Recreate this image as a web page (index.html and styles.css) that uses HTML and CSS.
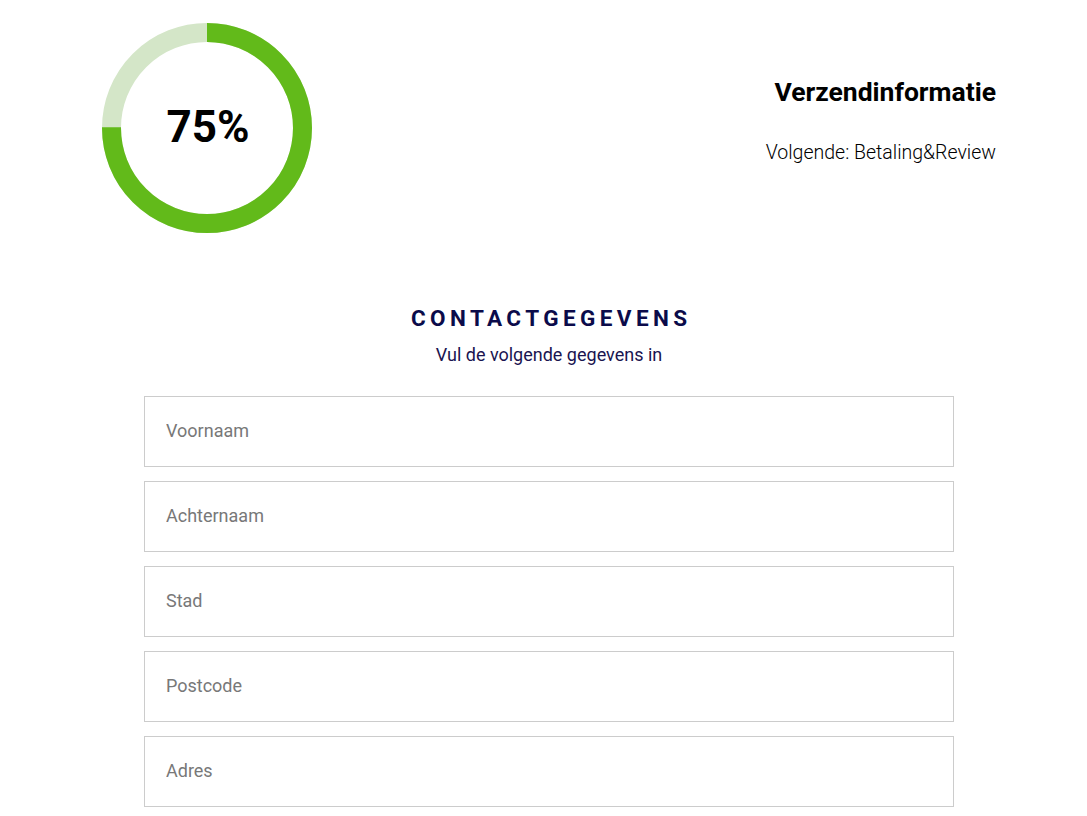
FILE: index.html
```html
<!DOCTYPE html>
<html lang="nl">
<head>
<meta charset="utf-8">
<link rel="stylesheet" href="styles.css">
</head>
<body>
<div class="top">
  <div class="progress">
    <svg class="ring" width="210" height="210" viewBox="0 0 210 210">
      <circle cx="105" cy="105" r="95.5" fill="none" stroke="#d4e6c8" stroke-width="19"/>
      <circle cx="105" cy="105" r="95.5" fill="none" stroke="#62ba1a" stroke-width="19"
        stroke-dasharray="450.03 600" transform="rotate(-90 105 105)"/>
    </svg>
    <div class="pct">75%</div>
  </div>
  <div class="step">
    <h2 class="step-title">Verzendinformatie</h2>
    <p class="step-next">Volgende: Betaling&amp;Review</p>
  </div>
</div>
<div class="contact">
  <h3 class="contact-title">CONTACTGEGEVENS</h3>
  <p class="contact-sub">Vul de volgende gegevens in</p>
  <form class="fields">
    <input class="field" type="text" placeholder="Voornaam">
    <input class="field" type="text" placeholder="Achternaam">
    <input class="field" type="text" placeholder="Stad">
    <input class="field" type="text" placeholder="Postcode">
    <input class="field" type="text" placeholder="Adres">
  </form>
</div>
</body>
</html>
```
FILE: styles.css
```css
* { box-sizing: border-box; }
html, body { margin: 0; padding: 0; background: #fff; }
body { font-family: Roboto, "Liberation Sans", sans-serif; color: #000; }

.top {
  display: flex;
  justify-content: space-between;
  padding: 23px 91px 0 102px;
}
.progress {
  position: relative;
  width: 210px;
  height: 210px;
}
.ring { display: block; }
.pct {
  position: absolute;
  inset: 0;
  display: flex;
  align-items: center;
  justify-content: center;
  font-size: 44px;
  font-weight: 700;
  padding-bottom: 3px;
  padding-left: 2px;
}
.step {
  text-align: right;
  padding-top: 53px;
}
.step-title {
  margin: 0;
  font-size: 26.5px;
  font-weight: 700;
  line-height: 32px;
}
.step-next {
  margin: 33px 0 0;
  font-size: 19.5px;
  font-weight: 300;
  line-height: 24px;
}

.contact {
  padding: 71px 0 0 11px;
  display: flex;
  flex-direction: column;
  align-items: center;
}
.contact-title {
  margin: 0;
  font-size: 22.5px;
  font-weight: 700;
  letter-spacing: 4.4px;
  line-height: 28px;
  color: #0b0b4a;
  padding-left: 4.4px;
}
.contact-sub {
  margin: 12px 0 0;
  font-size: 18px;
  line-height: 22px;
  color: #1a1450;
}
.fields {
  margin-top: 30px;
  width: 810px;
  display: flex;
  flex-direction: column;
  gap: 14px;
}
.field {
  display: block;
  width: 100%;
  height: 71px;
  border: 1px solid #cccccc;
  border-radius: 0;
  padding: 0 21px 2px;
  font-family: Roboto, "Liberation Sans", sans-serif;
  font-size: 18px;
  color: #333;
  background: #fff;
  outline: none;
}
.field::placeholder { color: #787878; }
```
